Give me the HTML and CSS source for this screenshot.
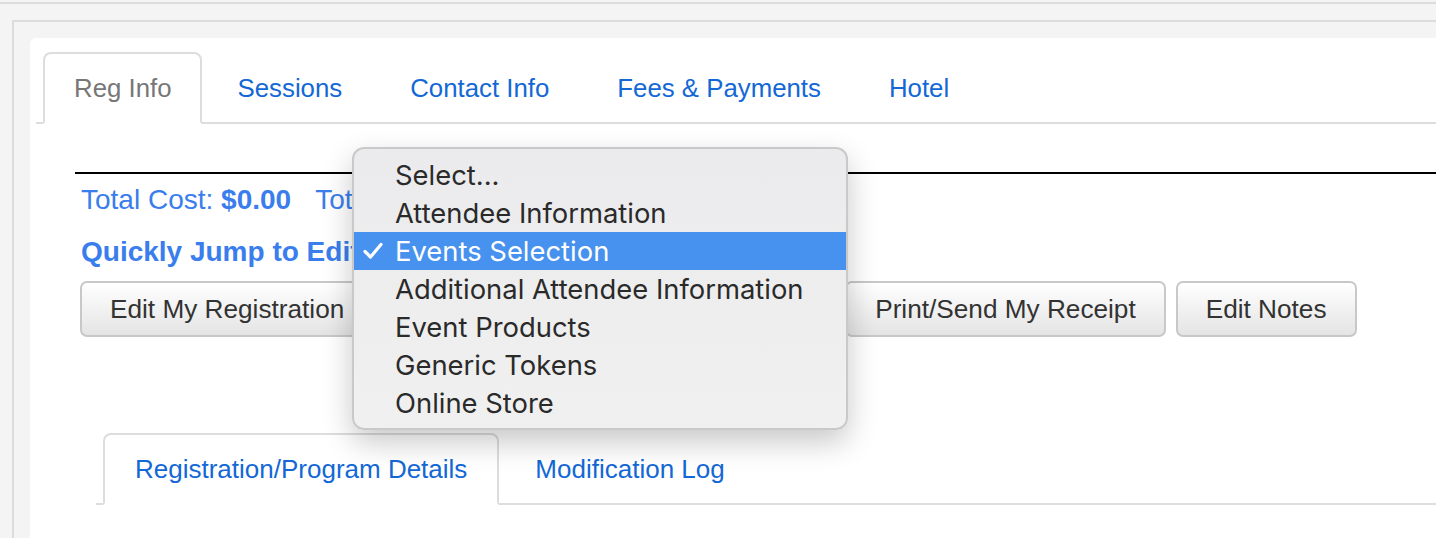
FILE: index.html
```html
<!DOCTYPE html>
<html>
<head>
<meta charset="utf-8">
<link rel="stylesheet" href="styles.css">
</head>
<body>
<div class="page">
  <div class="frame">
    <div class="panel">
      <ul class="tabs">
        <li class="tab active">Reg Info</li>
        <li class="tab">Sessions</li>
        <li class="tab">Contact Info</li>
        <li class="tab">Fees &amp; Payments</li>
        <li class="tab">Hotel</li>
      </ul>
      <div class="content">
        <div class="rule"></div>
        <div class="totals">Total Cost: <b>$0.00</b><span class="paid">Total Paid: <b>$0.00</b></span></div>
        <div class="jump">Quickly Jump to Edit:</div>
        <div class="buttons">
          <button class="btn">Edit My Registration</button>
          <button class="btn">Cancel My Registration</button>
          <button class="btn btn-short">Edit</button>
          <button class="btn">Print/Send My Receipt</button>
          <button class="btn">Edit Notes</button>
        </div>
        <ul class="tabs subtabs">
          <li class="tab active sub">Registration/Program Details</li>
          <li class="tab sub">Modification Log</li>
        </ul>
      </div>
    </div>
  </div>
</div>
<div class="menu">
  <div class="item">Select...</div>
  <div class="item">Attendee Information</div>
  <div class="item selected"><svg class="check" width="22" height="20" viewBox="0 0 22 20"><path d="M3 10.5 L8.5 16 L19 3.5" fill="none" stroke="#fff" stroke-width="3.2" stroke-linecap="round" stroke-linejoin="round"/></svg>Events Selection</div>
  <div class="item">Additional Attendee Information</div>
  <div class="item">Event Products</div>
  <div class="item">Generic Tokens</div>
  <div class="item">Online Store</div>
</div>
</body>
</html>
```

FILE: styles.css
```css
html, body {
  margin: 0;
  padding: 0;
  background: #f4f4f4;
  overflow: hidden;
  font-family: "Liberation Sans", Arial, sans-serif;
}
.page {
  margin-top: 2px;
  border-top: 2px solid #dcdcdc;
}
.frame {
  margin: 16px 0 0 12px;
  border-top: 2px solid #dcdcdc;
  border-left: 2px solid #dcdcdc;
  padding: 16px 0 0 16px;
  background: #f4f4f4;
}
.panel {
  background: #fff;
  border-top-left-radius: 6px;
  padding: 14px 0 0 6px;
  min-height: 560px;
}
.tabs {
  display: flex;
  list-style: none;
  margin: 0;
  padding: 0 0 0 7px;
  border-bottom: 2px solid #dddddd;
}
.tab {
  margin: 0 4px -2px 0;
  padding: 19px 30px;
  line-height: 30px;
  font-size: 25.8px;
  color: #1368d6;
  border: 2px solid transparent;
  border-radius: 8px 8px 0 0;
  white-space: nowrap;
}
.tab.active {
  background: #fff;
  border-color: #dddddd #dddddd transparent #dddddd;
}
.tabs:not(.subtabs) .tab.active {
  color: #777;
  padding-left: 29px;
  padding-right: 28px;
}
.tab.sub {
  font-size: 26px;
}
.content {
  margin-left: 39px;
}
.rule {
  margin-top: 48px;
  border-top: 2px solid #000;
}
.totals {
  margin-top: 10px;
  padding-left: 6px;
  font-size: 28px;
  line-height: 32px;
  color: #3a7ded;
}
.paid {
  margin-left: 24px;
}
.jump {
  margin-top: 20px;
  padding-left: 6px;
  font-size: 28px;
  line-height: 32px;
  font-weight: bold;
  color: #3a7ded;
}
.buttons {
  margin-top: 13px;
  padding-left: 5px;
  display: flex;
  gap: 10px;
}
.btn {
  font-family: "Liberation Sans", Arial, sans-serif;
  font-size: 26.2px;
  line-height: 27px;
  padding: 13px 28px 12px;
  color: #333;
  background: linear-gradient(#ffffff, #e4e4e4);
  border: 2px solid #c8c8c8;
  border-radius: 7px;
  white-space: nowrap;
}
.btn-short {
  padding-left: 30px;
  padding-right: 31px;
}
.subtabs {
  margin-top: 96px;
  margin-left: 21px;
}
.menu {
  position: absolute;
  left: 352px;
  top: 147px;
  width: 492px;
  padding: 7px 0 6px;
  background: linear-gradient(#ebebed, #f0f0f0);
  border: 2px solid #c9c9c9;
  border-radius: 12px;
  box-shadow: 0 12px 30px rgba(0, 0, 0, 0.22);
  font-family: Inter, "Liberation Sans", sans-serif;
}
.item {
  position: relative;
  height: 38px;
  line-height: 38px;
  padding-left: 41px;
  font-size: 27.4px;
  color: #2a2a2a;
  white-space: nowrap;
}
.item.selected {
  background: #4791ef;
  color: #fff;
}
.check {
  position: absolute;
  left: 8px;
  top: 9px;
}
```
